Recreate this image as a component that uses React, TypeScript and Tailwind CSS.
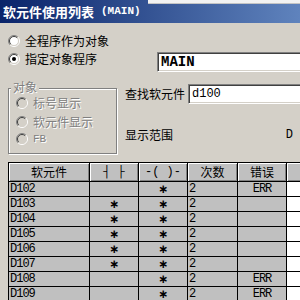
import React from "react";

const cjk = "font-['Noto_Sans_CJK_SC',sans-serif]";
const mono = "font-['Liberation_Mono',monospace]";

function Radio({ checked = false, disabled = false }: { checked?: boolean; disabled?: boolean }) {
  return (
    <svg width="12" height="12" viewBox="0 0 12 12" className="shrink-0">
      <circle cx="6" cy="6" r="4.5" fill={disabled ? "#d4d0c8" : "#ffffff"} />
      <path d="M 2.1 9.9 A 5.5 5.5 0 0 1 9.9 2.1" stroke="#808080" strokeWidth="1" fill="none" />
      <path d="M 9.9 2.1 A 5.5 5.5 0 0 1 2.1 9.9" stroke="#ffffff" strokeWidth="1" fill="none" />
      <path d="M 2.8 9.2 A 4.5 4.5 0 0 1 9.2 2.8" stroke="#404040" strokeWidth="1" fill="none" />
      <path d="M 9.2 2.8 A 4.5 4.5 0 0 1 2.8 9.2" stroke="#d4d0c8" strokeWidth="1" fill="none" />
      {checked && <circle cx="6" cy="6" r="2" fill="#000000" />}
    </svg>
  );
}

const sunken =
  "bg-white border border-[#808080] border-b-white border-r-white shadow-[inset_1px_1px_0_#404040,inset_-1px_-1px_0_#d4d0c8]";

const disabledText = "text-[#808080] [text-shadow:1px_1px_0_#ffffff]";

const rows: [string, boolean, boolean, string, string][] = [
  ["D102", false, true, "2", "ERR"],
  ["D103", true, true, "2", ""],
  ["D104", true, true, "2", ""],
  ["D105", true, true, "2", ""],
  ["D106", true, true, "2", ""],
  ["D107", true, true, "2", ""],
  ["D108", false, true, "2", "ERR"],
  ["D109", false, true, "2", "ERR"],
];

const headCell =
  "h-[19px] bg-[#c0c0c0] border-r border-b border-black shadow-[inset_1px_1px_0_#ffffff,inset_-1px_-1px_0_#808080] flex items-center justify-center text-[12px] leading-none text-black shrink-0";
const cell = "h-[15px] bg-[#c0c0c0] border-r border-b border-black flex items-center shrink-0";

function Star({ on }: { on: boolean }) {
  if (!on) return null;
  return <span className="font-['DejaVu_Sans',sans-serif] font-bold text-[12px] leading-none">∗</span>;
}

export default function App() {
  return (
    <div className="w-[300px] h-[300px] overflow-hidden bg-[#d4d0c8] relative">
      {/* title bar */}
      <div className="h-[23px] bg-[linear-gradient(to_right,#0a246a,#5f83bd)] flex items-center pl-[3px] gap-[7px]">
        <span className={`${cjk} text-[13px] font-bold text-white leading-none`}>软元件使用列表</span>
        <span className={`${mono} text-[11px] font-bold text-white leading-none`}>(MAIN)</span>
      </div>
      <div className="absolute top-0 left-[148px] right-0 h-[4px] bg-[#f2f2f2] border-b border-[#c4c4c4]" />

      {/* section A */}
      <div className="flex h-[59px]">
        <div className="w-[157px] shrink-0 pt-[9px] pl-[8px]">
          <div className="h-[18px] flex items-center gap-[5px]">
            <Radio />
            <span className={`${cjk} text-[12px] leading-none text-black`}>全程序作为对象</span>
          </div>
          <div className="h-[18px] flex items-center gap-[5px]">
            <Radio checked />
            <span className={`${cjk} text-[12px] leading-none text-black`}>指定对象程序</span>
          </div>
        </div>
        <div className="pt-[29px]">
          <div className={`${sunken} w-[170px] h-[20px] flex items-center pl-[3px]`}>
            <span className={`${mono} text-[14px] font-bold leading-none text-black`}>MAIN</span>
          </div>
        </div>
      </div>

      {/* section B */}
      <div className="flex h-[80px]">
        <div className="ml-[8px] mt-[6px] w-[109px] h-[66px] shrink-0 relative border border-[#808080] shadow-[1px_1px_0_#ffffff,inset_1px_1px_0_#ffffff] pl-[7px] pt-[4px]">
          <span className={`${cjk} ${disabledText} absolute left-[2px] top-[-8px] bg-[#d4d0c8] px-[2px] text-[12px] leading-none`}>
            对象
          </span>
          <div className="h-[19px] flex items-center gap-[5px]">
            <Radio disabled />
            <span className={`${cjk} ${disabledText} text-[12px] leading-none`}>标号显示</span>
          </div>
          <div className="h-[19px] flex items-center gap-[5px]">
            <Radio disabled />
            <span className={`${cjk} ${disabledText} text-[12px] leading-none`}>软元件显示</span>
          </div>
          <div className="h-[16px] flex items-center gap-[5px]">
            <Radio disabled />
            <span className={`${mono} ${disabledText} text-[11px] leading-none`}>FB</span>
          </div>
        </div>
        <div className="ml-[8px] w-[175px] min-w-0 shrink-0 flex flex-col">
          <div className="mt-[2px] h-[20px] flex items-center">
            <span className={`${cjk} text-[12px] leading-none text-black w-[63px] shrink-0`}>查找软元件</span>
            <div className={`${sunken} w-[130px] h-[20px] shrink-0 flex items-center pl-[3px]`}>
              <span className={`${mono} text-[12px] leading-none text-black`}>d100</span>
            </div>
          </div>
          <div className="mt-[22px] h-[18px] flex items-center justify-between pr-[7px]">
            <span className={`${cjk} text-[12px] leading-none text-black`}>显示范围</span>
            <span className={`${mono} text-[12px] leading-none text-black`}>D</span>
          </div>
        </div>
      </div>

      {/* table */}
      <div className="ml-[8px] w-[340px] border-l border-t border-black">
        <div className={`flex ${cjk}`}>
          <div className={`${headCell} w-[81px]`}>软元件</div>
          <div className={`${headCell} w-[49px] ${mono}`}>┤ ├</div>
          <div className={`${headCell} w-[49px] ${mono}`}>-( )-</div>
          <div className={`${headCell} w-[50px]`}>次数</div>
          <div className={`${headCell} w-[49px]`}>错误</div>
          <div className={`${headCell} w-[60px]`}></div>
        </div>
        {rows.map((r) => (
          <div key={r[0]} className={`flex ${mono} text-[12px] leading-none text-black`}>
            <div className={`${cell} w-[81px] pl-[1px] tracking-[-1px]`}>{r[0]}</div>
            <div className={`${cell} w-[49px] justify-center`}>
              <Star on={r[1]} />
            </div>
            <div className={`${cell} w-[49px] justify-center`}>
              <Star on={r[2]} />
            </div>
            <div className={`${cell} w-[50px] pl-[1px]`}>{r[3]}</div>
            <div className={`${cell} w-[49px] justify-center tracking-[-1px]`}>{r[4]}</div>
            <div className="h-[15px] w-[60px] bg-white border-b border-black shrink-0" />
          </div>
        ))}
      </div>
    </div>
  );
}
